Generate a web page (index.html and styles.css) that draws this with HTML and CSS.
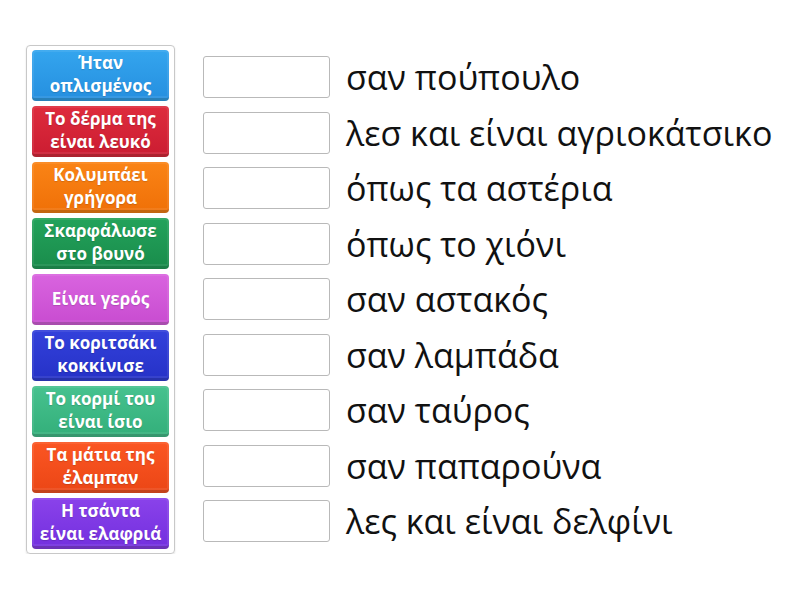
FILE: index.html
```html
<!DOCTYPE html>
<html lang="el">
<head>
<meta charset="utf-8">
<link rel="stylesheet" href="styles.css">
</head>
<body>
<div class="page">
  <div class="bank">
    <div class="tile c1">Ήταν<br>οπλισμένος</div>
    <div class="tile c2">Το δέρμα της<br>είναι λευκό</div>
    <div class="tile c3">Κολυμπάει<br>γρήγορα</div>
    <div class="tile c4">Σκαρφάλωσε<br>στο βουνό</div>
    <div class="tile c5">Είναι γερός</div>
    <div class="tile c6">Το κοριτσάκι<br>κοκκίνισε</div>
    <div class="tile c7">Το κορμί του<br>είναι ίσιο</div>
    <div class="tile c8">Τα μάτια της<br>έλαμπαν</div>
    <div class="tile c9">Η τσάντα<br>είναι ελαφριά</div>
  </div>
  <div class="targets">
    <div class="row"><div class="slot"></div><span class="label">σαν πούπουλο</span></div>
    <div class="row"><div class="slot"></div><span class="label">λεσ και είναι αγριοκάτσικο</span></div>
    <div class="row"><div class="slot"></div><span class="label">όπως τα αστέρια</span></div>
    <div class="row"><div class="slot"></div><span class="label">όπως το χιόνι</span></div>
    <div class="row"><div class="slot"></div><span class="label">σαν αστακός</span></div>
    <div class="row"><div class="slot"></div><span class="label">σαν λαμπάδα</span></div>
    <div class="row"><div class="slot"></div><span class="label">σαν ταύρος</span></div>
    <div class="row"><div class="slot"></div><span class="label">σαν παπαρούνα</span></div>
    <div class="row"><div class="slot"></div><span class="label">λες και είναι δελφίνι</span></div>
  </div>
</div>
</body>
</html>
```

FILE: styles.css
```css
html, body {
  margin: 0;
  padding: 0;
  background: #fff;
}
body {
  font-family: "Open Sans", "Noto Sans", sans-serif;
  color: #111;
}
.page {
  display: flex;
  align-items: flex-start;
  padding: 45px 0 0 26px;
  gap: 28px;
}
.bank {
  width: 137px;
  border: 1px solid #c8c8c8;
  border-radius: 4px;
  padding: 4px 5px 4px 5px;
  display: flex;
  flex-direction: column;
  gap: 5px;
  box-shadow: 0 1px 2px rgba(0,0,0,0.12);
}
.tile {
  height: 51px;
  box-sizing: border-box;
  border-radius: 4px;
  display: flex;
  align-items: center;
  justify-content: center;
  text-align: center;
  color: #fff;
  font-weight: 700;
  font-size: 17px;
  line-height: 23px;
  border-bottom: 3px solid rgba(0,0,0,0.22);
  box-shadow: inset 0 0 0 2px rgba(255,255,255,0.08);
  text-shadow: 0 1px 1px rgba(0,0,0,0.15);
  white-space: nowrap;
}
.c1 { background: linear-gradient(#34a5ee, #2690e0); }
.c2 { background: linear-gradient(#de2c3d, #cc1d32); }
.c3 { background: linear-gradient(#fa8416, #f07108); }
.c4 { background: linear-gradient(#23a35b, #1a8d4c); }
.c5 { background: linear-gradient(#d964df, #c94dd1); }
.c6 { background: linear-gradient(#3341db, #2632c8); }
.c7 { background: linear-gradient(#47c28f, #34b07b); }
.c8 { background: linear-gradient(#fb5623, #ec4716); }
.c9 { background: linear-gradient(#8a42ea, #7430df); }
.targets {
  display: flex;
  flex-direction: column;
  gap: 13.5px;
  padding-top: 11px;
}
.row {
  display: flex;
  align-items: center;
  height: 42px;
}
.slot {
  width: 127px;
  height: 42px;
  box-sizing: border-box;
  border: 1px solid #b9b9b9;
  border-radius: 3px;
  background: #fff;
  flex: none;
}
.label {
  margin-left: 16px;
  font-size: 34px;
  line-height: 42px;
  white-space: nowrap;
}
```
